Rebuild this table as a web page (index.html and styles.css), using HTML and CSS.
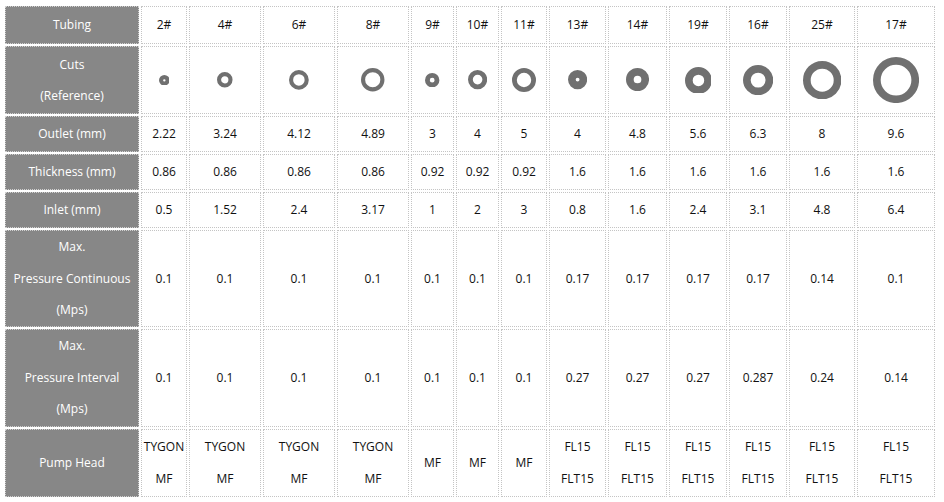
FILE: index.html
```html
<!DOCTYPE html>
<html>
<head>
<meta charset="utf-8">
<link rel="stylesheet" href="styles.css">
</head>
<body>
<table class="spec">
<colgroup>
<col style="width:134px"><col style="width:46px"><col style="width:72px"><col style="width:72px"><col style="width:72px"><col style="width:43px"><col style="width:43px"><col style="width:46px"><col style="width:57px"><col style="width:59px"><col style="width:58px"><col style="width:58px"><col style="width:66px"><col style="width:78px">
</colgroup>
<tr class="r-tubing">
<th class="lbl">Tubing</th>
<td>2#</td><td>4#</td><td>6#</td><td>8#</td><td>9#</td><td>10#</td><td>11#</td><td>13#</td><td>14#</td><td>19#</td><td>16#</td><td>25#</td><td>17#</td>
</tr>
<tr class="r-cuts">
<th class="lbl">Cuts<br>(Reference)</th>
<td><svg class="ring" width="10.66" height="10.66" viewBox="0 0 2.22 2.22"><circle cx="1.11" cy="1.11" r="0.68" stroke-width="0.86"/></svg></td>
<td><svg class="ring" width="15.55" height="15.55" viewBox="0 0 3.24 3.24"><circle cx="1.62" cy="1.62" r="1.19" stroke-width="0.86"/></svg></td>
<td><svg class="ring" width="19.78" height="19.78" viewBox="0 0 4.12 4.12"><circle cx="2.06" cy="2.06" r="1.63" stroke-width="0.86"/></svg></td>
<td><svg class="ring" width="23.47" height="23.47" viewBox="0 0 4.89 4.89"><circle cx="2.445" cy="2.445" r="2.015" stroke-width="0.86"/></svg></td>
<td><svg class="ring" width="14.4" height="14.4" viewBox="0 0 3 3"><circle cx="1.5" cy="1.5" r="1" stroke-width="1"/></svg></td>
<td><svg class="ring" width="19.2" height="19.2" viewBox="0 0 4 4"><circle cx="2" cy="2" r="1.5" stroke-width="1"/></svg></td>
<td><svg class="ring" width="24" height="24" viewBox="0 0 5 5"><circle cx="2.5" cy="2.5" r="2" stroke-width="1"/></svg></td>
<td><svg class="ring" width="19.2" height="19.2" viewBox="0 0 4 4"><circle cx="2" cy="2" r="1.2" stroke-width="1.6"/></svg></td>
<td><svg class="ring" width="23.04" height="23.04" viewBox="0 0 4.8 4.8"><circle cx="2.4" cy="2.4" r="1.6" stroke-width="1.6"/></svg></td>
<td><svg class="ring" width="26.88" height="26.88" viewBox="0 0 5.6 5.6"><circle cx="2.8" cy="2.8" r="2" stroke-width="1.6"/></svg></td>
<td><svg class="ring" width="30.24" height="30.24" viewBox="0 0 6.3 6.3"><circle cx="3.15" cy="3.15" r="2.35" stroke-width="1.6"/></svg></td>
<td><svg class="ring" width="38.4" height="38.4" viewBox="0 0 8 8"><circle cx="4" cy="4" r="3.2" stroke-width="1.6"/></svg></td>
<td><svg class="ring" width="46.08" height="46.08" viewBox="0 0 9.6 9.6"><circle cx="4.8" cy="4.8" r="4" stroke-width="1.6"/></svg></td>
</tr>
<tr class="r-single">
<th class="lbl">Outlet (mm)</th>
<td>2.22</td><td>3.24</td><td>4.12</td><td>4.89</td><td>3</td><td>4</td><td>5</td><td>4</td><td>4.8</td><td>5.6</td><td>6.3</td><td>8</td><td>9.6</td>
</tr>
<tr class="r-single">
<th class="lbl">Thickness (mm)</th>
<td>0.86</td><td>0.86</td><td>0.86</td><td>0.86</td><td>0.92</td><td>0.92</td><td>0.92</td><td>1.6</td><td>1.6</td><td>1.6</td><td>1.6</td><td>1.6</td><td>1.6</td>
</tr>
<tr class="r-inlet">
<th class="lbl">Inlet (mm)</th>
<td>0.5</td><td>1.52</td><td>2.4</td><td>3.17</td><td>1</td><td>2</td><td>3</td><td>0.8</td><td>1.6</td><td>2.4</td><td>3.1</td><td>4.8</td><td>6.4</td>
</tr>
<tr class="r-cont">
<th class="lbl">Max.<br>Pressure Continuous<br>(Mps)</th>
<td>0.1</td><td>0.1</td><td>0.1</td><td>0.1</td><td>0.1</td><td>0.1</td><td>0.1</td><td>0.17</td><td>0.17</td><td>0.17</td><td>0.17</td><td>0.14</td><td>0.1</td>
</tr>
<tr class="r-int">
<th class="lbl">Max.<br>Pressure Interval<br>(Mps)</th>
<td>0.1</td><td>0.1</td><td>0.1</td><td>0.1</td><td>0.1</td><td>0.1</td><td>0.1</td><td>0.27</td><td>0.27</td><td>0.27</td><td>0.287</td><td>0.24</td><td>0.14</td>
</tr>
<tr class="r-pump">
<th class="lbl">Pump Head</th>
<td>TYGON<br>MF</td><td>TYGON<br>MF</td><td>TYGON<br>MF</td><td>TYGON<br>MF</td><td>MF</td><td>MF</td><td>MF</td><td>FL15<br>FLT15</td><td>FL15<br>FLT15</td><td>FL15<br>FLT15</td><td>FL15<br>FLT15</td><td>FL15<br>FLT15</td><td>FL15<br>FLT15</td>
</tr>
</table>
</body>
</html>
```
FILE: styles.css
```css
html, body {
  margin: 0;
  padding: 0;
  background: #fff;
}
body {
  font-family: "Open Sans", "Noto Sans CJK KR", sans-serif;
  font-size: 12px;
  color: #111;
}
.spec {
  margin: 4px 0 0 3px;
  width: 934px;
  table-layout: fixed;
  border-collapse: separate;
  border-spacing: 2px;
}
.spec th, .spec td {
  box-sizing: border-box;
  border: 1px dotted #c4c4c4;
  padding: 0;
  text-align: center;
  vertical-align: middle;
  line-height: 31.5px;
  font-weight: normal;
  white-space: nowrap;
  overflow: hidden;
}
.spec .lbl {
  background: #878787;
  color: #fff;
  border-color: #d0d0d0;
}
.r-tubing th, .r-tubing td { height: 38px; }
.r-cuts th, .r-cuts td { height: 68px; }
.r-single th, .r-single td { height: 36px; }
.r-inlet th, .r-inlet td { height: 36px; }
.r-cont th, .r-cont td { height: 95px; }
.r-int th, .r-int td { height: 98px; }
.r-pump th, .r-pump td { height: 68px; }
.ring {
  display: block;
  margin: 0 auto;
}
.ring circle {
  fill: none;
  stroke: #707070;
}
```
